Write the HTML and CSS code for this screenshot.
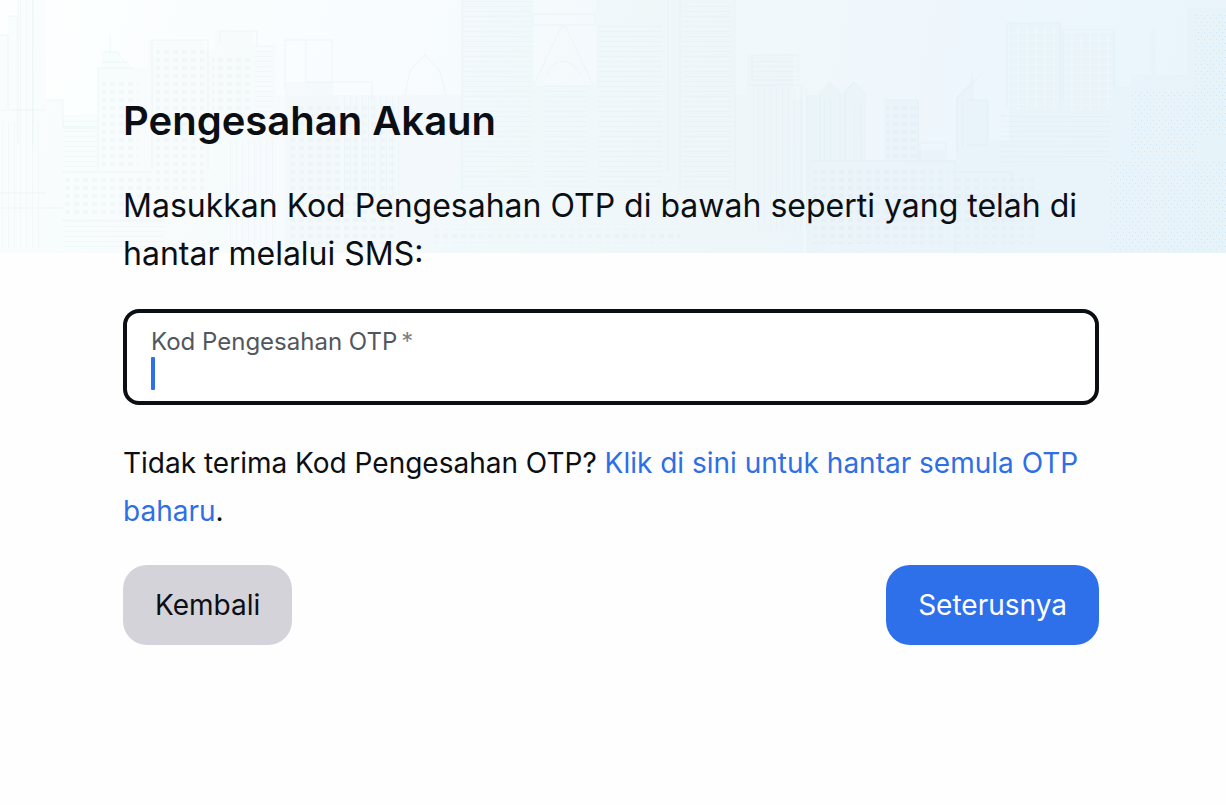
FILE: index.html
```
<!DOCTYPE html>
<html lang="ms">
<head>
<meta charset="utf-8">
<meta name="viewport" content="width=device-width, initial-scale=1">
<title>Pengesahan Akaun</title>
<link rel="stylesheet" href="styles.css">
</head>
<body>
<div class="banner" aria-hidden="true">
  <svg class="skyline" viewBox="0 0 1226 253" preserveAspectRatio="xMidYMin slice">
    <defs>
      <pattern id="windows" width="9" height="8" patternUnits="userSpaceOnUse"><path d="M2 2h5v4H2z" fill="#d4e6ec"/></pattern>
      <pattern id="panes" width="9" height="8" patternUnits="userSpaceOnUse"><path d="M0 0h9v1H0zM0 0h2v8H0z" fill="#fff"/></pattern>
      <pattern id="floors" width="8" height="5" patternUnits="userSpaceOnUse"><path d="M0 1h8v1H0z" fill="#d4e6ec"/></pattern>
      <pattern id="columns" width="6" height="8" patternUnits="userSpaceOnUse"><path d="M2 0h1v8H2z" fill="#d4e6ec"/></pattern>
      <pattern id="dots" width="6" height="7" patternUnits="userSpaceOnUse"><path d="M1 1h1v1H1zM4 4h1v1H4z" fill="#9fcdf2"/></pattern>
    </defs>
    <g class="masses">
      <path opacity="0.4" d="M0 35h8V16h10V0h28v100h17v15h35V68h4V52h18v10h10v6h18V40h56v10h11V31h37v13h24v51h62v158H0z"/>
      <path opacity="0.6" d="M285 253V82h48v13h67l62 0V0h71v85h63V0h139v95h12V55h46v45h10v153z"/>
      <path d="M806 253V95h14l10-12 11 12 13-13 12 13v65h20v-60h33v50h26v10h11V98l15-16V70l3 12v18h15v40h20V23h53v10h54v53h15V75h20v-47h5v47h31V8h39v245z"/>
    </g>
    <g class="edges">
      <path d="M0 35h8v73M18 0v144M33 0v145M8 16h10M0 110h46M46 100h17v28h35M0 193h46M0 208h62M98 170V68h36M102 62h26M103 52h14l7 10M110 35v17M152 170V40h56v130M220 43V31h37v15M285 90V40h47v42M306 40v42h66v20M62 172h90M62 220h102"/>
      <path d="M405 95l4-20c2-10 9-10 16-20 8 10 14 12 16 20l5 20M462 0v190M533 14h62v11h-62zM534 85l27-58h5l27 58M547 75c4-18 26-18 33 0M668 0v172M680 0v190M735 0v190M752 55h46v25h-46zM747 85h55v140"/>
      <path d="M820 160V92l10-9 10 9v68M845 160V92l9-10 12 12M885 160v-60h33v60M920 160v-17h26v20M957 150V98l25-24V70M967 100h20v45h-20M1007 110V23h53v88M1063 100V30h51v56M1000 115h6M810 161h145v92M950 172h62v10"/>
    </g>
    <g class="details">
      <path d="M102 78h36v90h-36zM156 50h48v140h-48zM212 55h40v55h-40zM64 176h88v38H64zM288 104h110v140H288zM813 168h135v76H813zM886 103h32v55h-32zM956 174h80v70h-80zM430 229h250v14H430z" fill="url(#windows)"/>
      <path d="M64 120h32v50H64zM164 218v30h-100v-30zM255 45h18v68h-18zM463 0h70v190h-70zM598 25h64v165h-64zM545 85h42v105h-42zM682 5h50v185h-50zM753 57h44v22h-44zM1000 115h110v50h-110z" fill="url(#floors)"/>
      <path d="M20 0h14v144H20zM0 122h44v126H0zM230 140h48v106h-48zM344 96h56v100h-56zM757 88h50v142h-50zM820 100h12v60h-12zM850 105h16v55h-16zM957 100h11v48h-11z" fill="url(#columns)"/>
    </g>
    <path class="panes" d="M1010 27h48v82h-48zM1066 34h46v76h-46z" fill="url(#panes)"/>
    <path class="speckle" d="M1195 15h31v120h-31zM1130 90h66v74h-66zM1110 162h116v88h-116z" fill="url(#dots)"/>
  </svg>
</div>
<main class="verify">
  <h1 class="verify-title">Pengesahan Akaun</h1>
  <form class="verify-form" action="#" method="post">
    <p class="intro">Masukkan Kod Pengesahan OTP di bawah seperti yang telah di hantar melalui SMS:</p>
    <div class="field">
      <label class="field-label" for="otp">Kod Pengesahan OTP<span class="required">*</span></label>
      <div class="field-entry">
        <span class="caret"></span>
        <input class="field-input" id="otp" name="otp" type="text" inputmode="numeric" autocomplete="one-time-code" required>
      </div>
    </div>
    <p class="resend">Tidak terima Kod Pengesahan OTP? <a class="resend-link" href="#">Klik di sini untuk hantar semula OTP baharu</a>.</p>
    <div class="actions">
      <button class="button button-back" type="button">Kembali</button>
      <button class="button button-next" type="submit">Seterusnya</button>
    </div>
  </form>
</main>
</body>
</html>
```
FILE: styles.css
```
* {
  box-sizing: border-box;
}

body {
  margin: 0;
  position: relative;
  background: #fefefe;
  color: #0b0f14;
  font-family: Inter, "Liberation Sans", sans-serif;
}

.banner {
  position: absolute;
  inset: 0 0 auto;
  height: 253px;
  overflow: hidden;
  background: linear-gradient(100deg, #fdffff 0%, #f8fcfe 30%, #f1f8fb 58%, #edf6fd 80%, #e9f5fb 100%);
}

.skyline {
  display: block;
  width: 100%;
  height: 100%;
}

.masses {
  fill: #dfeef3;
  opacity: 0.25;
}

.details {
  opacity: 0.16;
}

.panes {
  opacity: 0.2;
}

.speckle {
  opacity: 0.35;
}

.edges {
  fill: none;
  stroke: #d4e7ee;
  opacity: 0.28;
}

.verify {
  position: relative;
  padding: 96px 127px 48px 123px;
}

.verify-title {
  margin: 0 0 36px;
  font-size: 40px;
  font-weight: 600;
  line-height: 50px;
}

.verify-form {
  display: flex;
  flex-direction: column;
}

.intro {
  margin: 0 0 31px;
  font-size: 32px;
  line-height: 48px;
}

.field {
  display: flex;
  flex-direction: column;
  height: 96px;
  padding: 14px 24px;
  border: 4px solid #0b0f14;
  border-radius: 16px;
  background: #fff;
}

.field-label {
  color: #52575d;
  font-size: 24px;
  line-height: 30px;
}

.required {
  margin-left: 4px;
  color: #7b7f84;
}

.field-entry {
  display: flex;
  height: 32px;
}

.caret {
  width: 4px;
  height: 33px;
  flex: none;
  border-radius: 1px;
  background: #2e6fea;
}

.field-input {
  flex: 1;
  min-width: 0;
  padding: 0;
  border: 0;
  outline: 0;
  background: transparent;
  color: inherit;
  font: inherit;
  font-size: 28px;
}

.resend {
  margin: 34px 0 30px;
  font-size: 28px;
  line-height: 48px;
}

.resend-link {
  color: #2e6fe5;
  text-decoration: none;
}

.actions {
  display: flex;
  justify-content: space-between;
}

.button {
  height: 80px;
  padding: 0 32px;
  border: 0;
  border-radius: 24px;
  font: inherit;
  font-size: 28px;
  cursor: pointer;
}

.button-back {
  background: #d4d3d9;
  color: #0b0f14;
}

.button-next {
  background: #2e6fea;
  color: #fff;
}
```
